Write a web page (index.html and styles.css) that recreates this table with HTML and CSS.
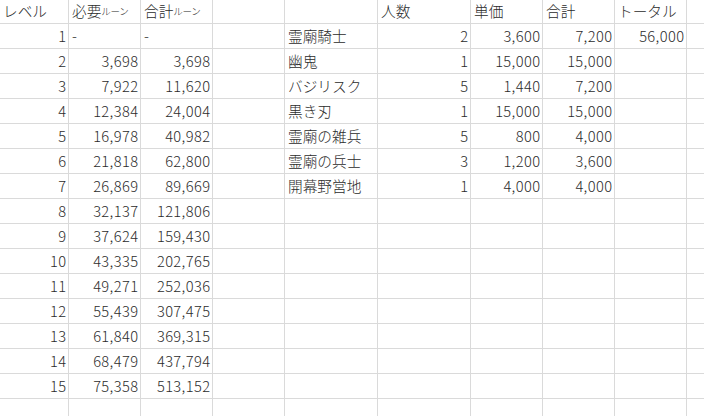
FILE: index.html
```html
<!DOCTYPE html>
<html lang="ja">
<head>
<meta charset="utf-8">
<title>Sheet</title>
<link rel="stylesheet" href="styles.css">
</head>
<body>
<div class="sheet">
  <div class="c">レベル</div><div class="c">必要<small>ルーン</small></div><div class="c">合計<small>ルーン</small></div><div class="c"></div><div class="c"></div><div class="c">人数</div><div class="c">単価</div><div class="c">合計</div><div class="c">トータル</div><div class="c"></div>

  <div class="c n">1</div><div class="c">-</div><div class="c">-</div><div class="c"></div><div class="c">霊廟騎士</div><div class="c n">2</div><div class="c n">3,600</div><div class="c n">7,200</div><div class="c n">56,000</div><div class="c"></div>

  <div class="c n">2</div><div class="c n">3,698</div><div class="c n">3,698</div><div class="c"></div><div class="c">幽鬼</div><div class="c n">1</div><div class="c n">15,000</div><div class="c n">15,000</div><div class="c"></div><div class="c"></div>

  <div class="c n">3</div><div class="c n">7,922</div><div class="c n">11,620</div><div class="c"></div><div class="c">バジリスク</div><div class="c n">5</div><div class="c n">1,440</div><div class="c n">7,200</div><div class="c"></div><div class="c"></div>

  <div class="c n">4</div><div class="c n">12,384</div><div class="c n">24,004</div><div class="c"></div><div class="c">黒き刃</div><div class="c n">1</div><div class="c n">15,000</div><div class="c n">15,000</div><div class="c"></div><div class="c"></div>

  <div class="c n">5</div><div class="c n">16,978</div><div class="c n">40,982</div><div class="c"></div><div class="c">霊廟の雑兵</div><div class="c n">5</div><div class="c n">800</div><div class="c n">4,000</div><div class="c"></div><div class="c"></div>

  <div class="c n">6</div><div class="c n">21,818</div><div class="c n">62,800</div><div class="c"></div><div class="c">霊廟の兵士</div><div class="c n">3</div><div class="c n">1,200</div><div class="c n">3,600</div><div class="c"></div><div class="c"></div>

  <div class="c n">7</div><div class="c n">26,869</div><div class="c n">89,669</div><div class="c"></div><div class="c">開幕野営地</div><div class="c n">1</div><div class="c n">4,000</div><div class="c n">4,000</div><div class="c"></div><div class="c"></div>

  <div class="c n">8</div><div class="c n">32,137</div><div class="c n">121,806</div><div class="c"></div><div class="c"></div><div class="c"></div><div class="c"></div><div class="c"></div><div class="c"></div><div class="c"></div>

  <div class="c n">9</div><div class="c n">37,624</div><div class="c n">159,430</div><div class="c"></div><div class="c"></div><div class="c"></div><div class="c"></div><div class="c"></div><div class="c"></div><div class="c"></div>

  <div class="c n">10</div><div class="c n">43,335</div><div class="c n">202,765</div><div class="c"></div><div class="c"></div><div class="c"></div><div class="c"></div><div class="c"></div><div class="c"></div><div class="c"></div>

  <div class="c n">11</div><div class="c n">49,271</div><div class="c n">252,036</div><div class="c"></div><div class="c"></div><div class="c"></div><div class="c"></div><div class="c"></div><div class="c"></div><div class="c"></div>

  <div class="c n">12</div><div class="c n">55,439</div><div class="c n">307,475</div><div class="c"></div><div class="c"></div><div class="c"></div><div class="c"></div><div class="c"></div><div class="c"></div><div class="c"></div>

  <div class="c n">13</div><div class="c n">61,840</div><div class="c n">369,315</div><div class="c"></div><div class="c"></div><div class="c"></div><div class="c"></div><div class="c"></div><div class="c"></div><div class="c"></div>

  <div class="c n">14</div><div class="c n">68,479</div><div class="c n">437,794</div><div class="c"></div><div class="c"></div><div class="c"></div><div class="c"></div><div class="c"></div><div class="c"></div><div class="c"></div>

  <div class="c n">15</div><div class="c n">75,358</div><div class="c n">513,152</div><div class="c"></div><div class="c"></div><div class="c"></div><div class="c"></div><div class="c"></div><div class="c"></div><div class="c"></div>

  <div class="c"></div><div class="c"></div><div class="c"></div><div class="c"></div><div class="c"></div><div class="c"></div><div class="c"></div><div class="c"></div><div class="c"></div><div class="c"></div>
</div>
</body>
</html>
```
FILE: styles.css
```css
html, body {
  margin: 0;
  padding: 0;
  background: #ffffff;
  overflow: hidden;
  width: 704px;
  height: 416px;
}

.sheet {
  display: grid;
  grid-template-columns: 69px 72px 72px 72px 93px 93px 72px 72px 72px 17px;
  grid-template-rows: 24px repeat(15, 25px) 17px;
  font-family: "Noto Sans CJK JP", "Noto Sans", sans-serif;
  font-weight: 300;
  font-size: 14.67px;
  color: #2b2b2b;
}

.c {
  box-sizing: border-box;
  border-right: 1px solid #dadada;
  border-bottom: 1px solid #dadada;
  display: flex;
  align-items: flex-end;
  justify-content: flex-start;
  padding: 0 2px 3px 3px;
  line-height: 18px;
  white-space: nowrap;
  overflow: hidden;
}

.c:nth-child(10n) {
  border-right: none;
}

.c:nth-last-child(-n+10) {
  border-bottom: none;
}

.n {
  justify-content: flex-end;
  letter-spacing: 0.4px;
  padding-right: 1.6px;
}

.c small {
  font-size: 9.5px;
  line-height: 18px;
  letter-spacing: -0.3px;
}
```
